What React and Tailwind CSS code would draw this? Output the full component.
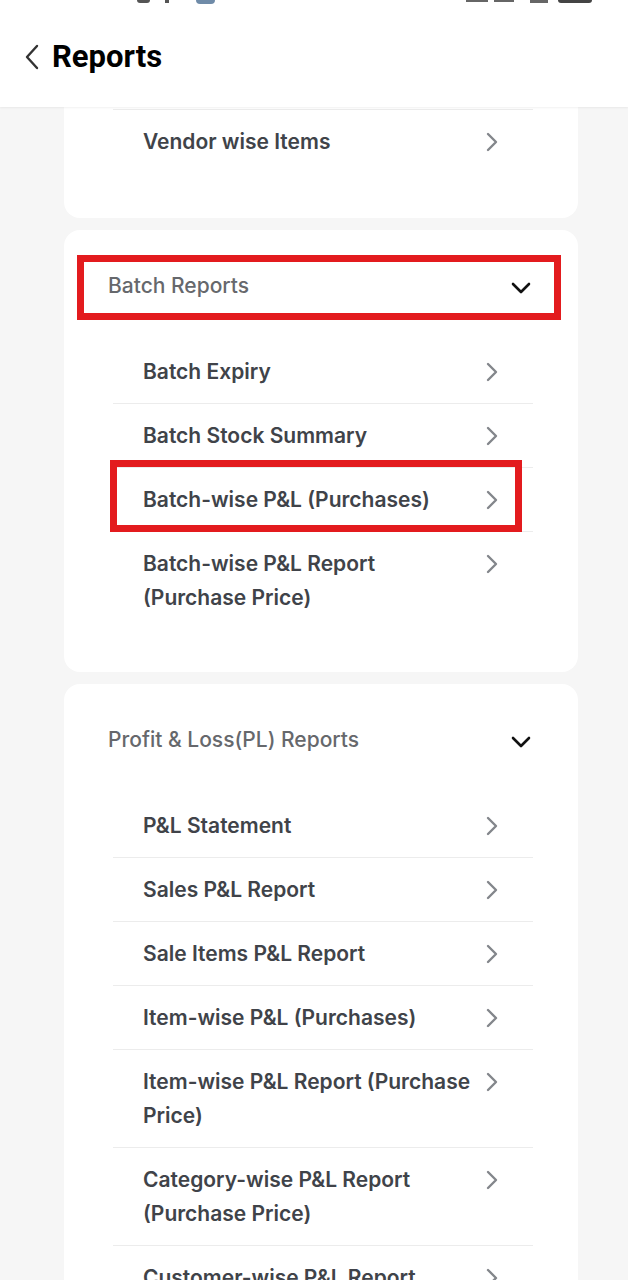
import React from 'react';

const ChevronRight = () => (
  <svg width="14" height="22" viewBox="0 0 14 22" fill="none" className="shrink-0">
    <path d="M3 3l8 8-8 8" stroke="#83868b" strokeWidth="2.4" strokeLinecap="round" strokeLinejoin="round" />
  </svg>
);

const ChevronDown = () => (
  <svg width="22" height="14" viewBox="0 0 22 14" fill="none" className="shrink-0 mt-[3px]">
    <path d="M3 3l8 8 8-8" stroke="#111" strokeWidth="2.6" strokeLinecap="round" strokeLinejoin="round" />
  </svg>
);

const Row = ({ label, first }) => (
  <div className={`flex items-start justify-between pl-[30px] pr-[34px] pt-[15px] pb-[14px] ${first ? '' : 'border-t border-[#ececec]'}`}>
    <span className="text-[21px] leading-[34px] font-semibold text-[#404349] max-w-[334px]">{label}</span>
    <div className="h-[34px] flex items-center">
      <ChevronRight />
    </div>
  </div>
);

const Section = ({ title, items, children }) => (
  <div className="relative bg-white rounded-2xl pt-[36px] pb-[43px]">
    <div className="flex items-center justify-between h-[40px] pl-[44px] pr-[46px]">
      <span className="text-[21px] font-medium text-[#66686c]">{title}</span>
      <ChevronDown />
    </div>
    <div className="mt-[34px] ml-[49px] mr-[45px]">
      {items.map((item, i) => (
        <Row key={item} label={item} first={i === 0} />
      ))}
    </div>
    {children}
  </div>
);

export default function App() {
  const batchItems = [
    'Batch Expiry',
    'Batch Stock Summary',
    'Batch-wise P&L (Purchases)',
    'Batch-wise P&L Report (Purchase Price)'
  ];
  const plItems = [
    'P&L Statement',
    'Sales P&L Report',
    'Sale Items P&L Report',
    'Item-wise P&L (Purchases)',
    'Item-wise P&L Report (Purchase Price)',
    'Category-wise P&L Report (Purchase Price)',
    'Customer-wise P&L Report',
    'Supplier-wise P&L Report'
  ];

  return (
    <div className="w-[628px] h-[1280px] overflow-hidden bg-[#f6f6f6]" style={{ fontFamily: 'Inter, "Noto Sans", sans-serif' }}>
      {/* Top bar */}
      <header className="relative z-10 bg-white h-[107px] shadow-[0_1px_2px_rgba(0,0,0,0.06)]">
        <div className="flex items-start h-[5px]">
          <div className="ml-[137px] w-[13px] h-[3px] bg-[#555] rounded-b-sm" />
          <div className="ml-[15px] w-[4px] h-[3px] bg-[#555]" />
          <div className="ml-[27px] w-[19px] h-[4px] bg-[#6f8ba8] rounded-b-md" />
          <div className="ml-auto flex items-start gap-[6px] mr-[36px]">
            <div className="w-[22px] h-[2px] bg-[#666]" />
            <div className="w-[20px] h-[2px] bg-[#666]" />
            <div className="ml-[10px] w-[18px] h-[3px] bg-[#666]" />
            <div className="ml-[4px] w-[34px] h-[3px] bg-[#444] rounded-b-sm" />
          </div>
        </div>
        <div className="flex items-center h-[102px] pl-[24px] pt-[2px]">
          <svg width="16" height="26" viewBox="0 0 16 26" fill="none">
            <path d="M13 2L3 13l10 11" stroke="#333" strokeWidth="2.4" strokeLinecap="round" strokeLinejoin="round" />
          </svg>
          <h1 className="ml-[12px] text-[31px] font-bold text-black" style={{ fontFamily: 'Roboto, sans-serif' }}>Reports</h1>
        </div>
      </header>

      <main className="pl-[64px] pr-[50px] flex flex-col gap-[12px] w-[628px] box-border">
        {/* Stock reports (scrolled) */}
        <div className="bg-white rounded-b-2xl pt-[2px] pb-[45px]">
          <div className="ml-[49px] mr-[45px] border-t border-[#ececec] flex items-start justify-between pl-[30px] pr-[34px] pt-[15px] pb-[14px]">
            <span className="text-[21px] leading-[34px] font-semibold text-[#404349]">Vendor wise Items</span>
            <div className="h-[34px] flex items-center">
              <ChevronRight />
            </div>
          </div>
        </div>

        <Section title="Batch Reports" items={batchItems}>
          <div className="absolute left-[13px] top-[25px] w-[484px] h-[65px] border-[7px] border-[#e31b1e]" />
          <div className="absolute left-[46px] top-[230px] w-[412px] h-[72px] border-[7px] border-[#e31b1e]" />
        </Section>

        <Section title="Profit & Loss(PL) Reports" items={plItems} />
      </main>
    </div>
  );
}
